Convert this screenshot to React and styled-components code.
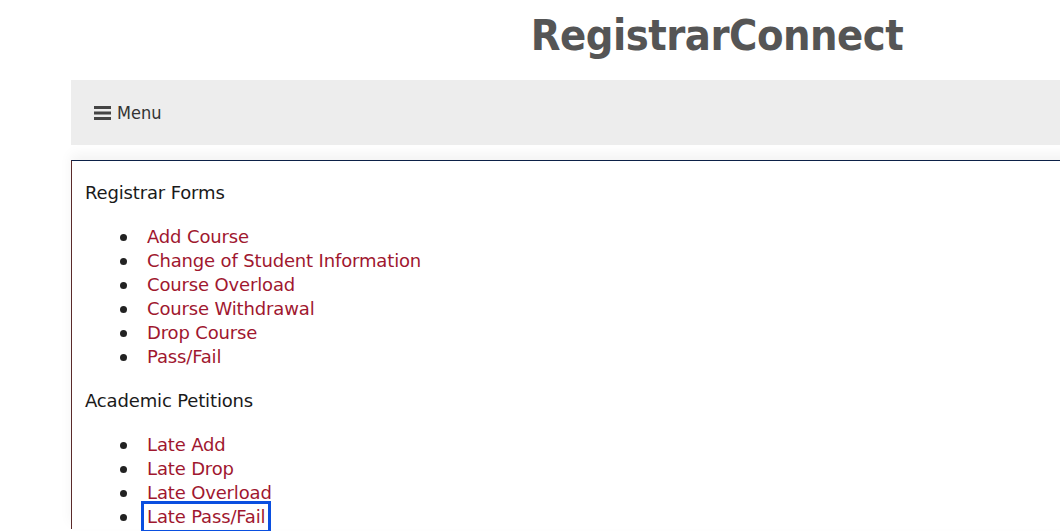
import React from "react";
import styled, { createGlobalStyle } from "styled-components";

const GlobalStyle = createGlobalStyle`
  html, body {
    margin: 0;
    padding: 0;
    background: #fff;
    overflow: hidden;
  }
  body {
    font-family: "DejaVu Sans", Tahoma, sans-serif;
    color: #222;
  }
`;

const Page = styled.div`
  width: 1292px;
  margin-left: 71px;
`;

const Title = styled.h1`
  margin: 0;
  padding: 10px 0 0;
  height: 70px;
  box-sizing: border-box;
  text-align: center;
  font-family: "DejaVu Sans Condensed", Tahoma, sans-serif;
  font-size: 43px;
  font-weight: bold;
  color: #555;
  letter-spacing: -0.5px;
`;

const NavBar = styled.nav`
  background: #ededed;
  height: 65px;
  display: flex;
  align-items: center;
  padding-left: 23px;
  margin-top: 10px;
`;

const MenuButton = styled.button`
  display: flex;
  align-items: center;
  gap: 6px;
  background: none;
  border: 0;
  padding: 0;
  font-family: "DejaVu Sans Condensed", Tahoma, sans-serif;
  font-size: 18px;
  color: #333;
`;

const Card = styled.section`
  margin-top: 15px;
  border-top: 1px solid #0c2148;
  border-left: 1px solid #5a2a2a;
  box-shadow: 0 -6px 12px rgba(0, 0, 0, 0.05);
  padding: 20px 13px 0;
`;

const Heading = styled.p`
  margin: 0 0 20px;
  font-size: 18px;
  line-height: 24px;
  letter-spacing: -0.15px;
  color: #1a1a1a;
`;

const List = styled.ul`
  margin: 0 0 20px;
  padding-left: 35px;
  list-style: none;
  font-size: 18px;
  line-height: 24px;
  letter-spacing: -0.15px;
`;

const Item = styled.li`
  display: flex;
  align-items: center;
  gap: 20px;
`;

const Bullet = styled.span`
  width: 7px;
  height: 7px;
  border-radius: 50%;
  background: #222;
  flex: none;
`;

const Link = styled.a`
  color: #a0172f;
  text-decoration: none;
  padding: 0 2px;
  margin: 0 -2px;
  outline: ${(p) => (p.$focused ? "3px solid #0a4fe0" : "none")};
  outline-offset: 1px;
`;

const HamburgerIcon = () => (
  <svg width="17" height="14" viewBox="0 0 17 14" aria-hidden="true">
    <rect x="0" y="0" width="17" height="3" fill="#444" />
    <rect x="0" y="5.5" width="17" height="3" fill="#444" />
    <rect x="0" y="11" width="17" height="3" fill="#444" />
  </svg>
);

const registrarForms = [
  "Add Course",
  "Change of Student Information",
  "Course Overload",
  "Course Withdrawal",
  "Drop Course",
  "Pass/Fail",
];

const petitions = ["Late Add", "Late Drop", "Late Overload", "Late Pass/Fail"];

export default function App() {
  return (
    <>
      <GlobalStyle />
      <Page>
        <Title>RegistrarConnect</Title>
        <NavBar>
          <MenuButton>
            <HamburgerIcon />
            Menu
          </MenuButton>
        </NavBar>
        <Card>
          <Heading>Registrar Forms</Heading>
          <List>
            {registrarForms.map((f) => (
              <Item key={f}>
                <Bullet />
                <Link href="#">{f}</Link>
              </Item>
            ))}
          </List>
          <Heading>Academic Petitions</Heading>
          <List>
            {petitions.map((f) => (
              <Item key={f}>
                <Bullet />
                <Link href="#" $focused={f === "Late Pass/Fail"}>
                  {f}
                </Link>
              </Item>
            ))}
          </List>
        </Card>
      </Page>
    </>
  );
}
